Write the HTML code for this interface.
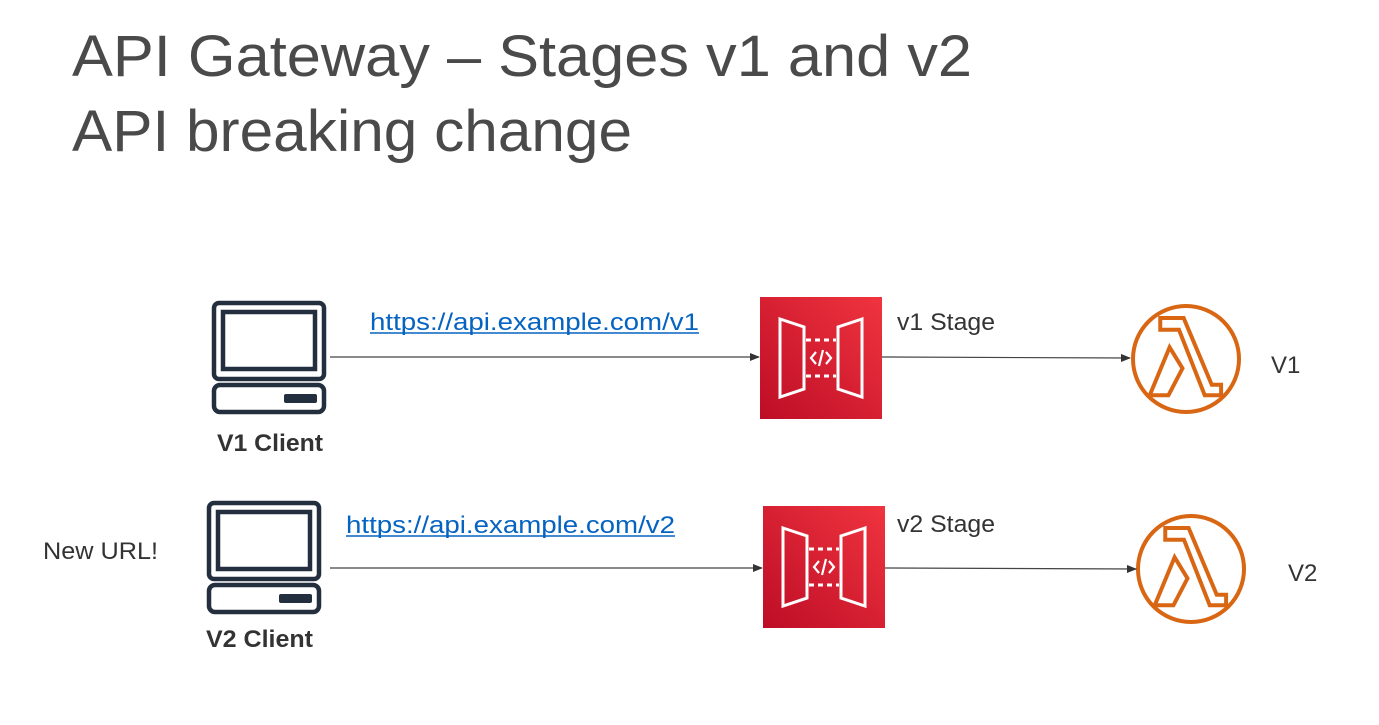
<!DOCTYPE html>
<html><head><meta charset="utf-8"><style>
html,body{margin:0;padding:0;background:#fff;}
svg{display:block;}
</style></head><body>
<svg width="1379" height="725" viewBox="0 0 1379 725" xmlns="http://www.w3.org/2000/svg" font-family="'Liberation Sans', sans-serif">
<defs>
<linearGradient id="rg" x1="0" y1="1" x2="1" y2="0"><stop offset="0" stop-color="#bd0d26"/><stop offset="1" stop-color="#f0343f"/></linearGradient>
<g id="mon" fill="none" stroke="#232f3e" stroke-width="4.5">
<rect x="2" y="2" width="110" height="76" rx="5"/>
<rect x="11" y="11" width="92" height="57"/>
<rect x="2" y="84" width="110" height="27" rx="6"/>
<rect x="72" y="93" width="33" height="9" rx="2" fill="#232f3e" stroke="none"/>
</g>
<g id="gw">
<rect x="0" y="0" width="122" height="122" fill="url(#rg)"/>
<g fill="none" stroke="#fff" stroke-width="3">
<path d="M20 22 L44 30 L44 92 L20 100 Z"/>
<path d="M102 22 L78 30 L78 92 L102 100 Z"/>
<path d="M46 43 H76 M46 79 H76" stroke-dasharray="5 4"/>
<path d="M56 55 L51 61 L56 67 M66 55 L71 61 L66 67 M63 53 L59 69" stroke-width="2.2"/>
</g>
</g>
<g id="lam" fill="none" stroke="#d86613" stroke-width="4">
<circle cx="0" cy="0" r="53"/>
<g transform="scale(1.17)" stroke-width="3.4">
<path d="M-22 -35 H-2 L22 22 H30 V31 H16 L-6 -25 H-22 Z"/>
<path d="M-14 -10 L-3 8 L-15 31 H-31 Z"/>
</g>
</g>
<marker id="ar" markerWidth="10" markerHeight="8" refX="9" refY="4" orient="auto" markerUnits="userSpaceOnUse"><path d="M0 0 L10 4 L0 8 Z" fill="#333"/></marker>
</defs>
<g fill="#4a4a4a" font-size="58">
<text x="72" y="76" textLength="900" lengthAdjust="spacingAndGlyphs">API Gateway – Stages v1 and v2</text>
<text x="72" y="151" textLength="560" lengthAdjust="spacingAndGlyphs">API breaking change</text>
</g>
<use href="#mon" x="212" y="301"/>
<use href="#mon" x="207" y="501"/>
<use href="#gw" x="760" y="297"/>
<use href="#gw" x="763" y="506"/>
<use href="#lam" x="1186" y="359"/>
<use href="#lam" x="1191" y="569"/>
<g stroke="#444" stroke-width="1.2" marker-end="url(#ar)">
<line x1="330" y1="357" x2="759" y2="357"/>
<line x1="882" y1="357" x2="1130" y2="358"/>
<line x1="330" y1="568" x2="762" y2="568"/>
<line x1="885" y1="568" x2="1136" y2="569"/>
</g>
<g font-size="24">
<text x="370" y="330" fill="#0563c1" textLength="329" lengthAdjust="spacingAndGlyphs">https://api.example.com/v1</text>
<text x="346" y="533" fill="#0563c1" textLength="329" lengthAdjust="spacingAndGlyphs">https://api.example.com/v2</text>
<text x="897" y="330" fill="#333" textLength="98" lengthAdjust="spacingAndGlyphs">v1 Stage</text>
<text x="897" y="532" fill="#333" textLength="98" lengthAdjust="spacingAndGlyphs">v2 Stage</text>
<text x="1271" y="373" fill="#333">V1</text>
<text x="1288" y="581" fill="#333">V2</text>
<text x="43" y="559" fill="#333" textLength="115" lengthAdjust="spacingAndGlyphs">New URL!</text>
<text x="217" y="451" fill="#333" font-weight="bold" textLength="106" lengthAdjust="spacingAndGlyphs">V1 Client</text>
<text x="206" y="647" fill="#333" font-weight="bold" textLength="107" lengthAdjust="spacingAndGlyphs">V2 Client</text>
</g>
<line x1="370" y1="333" x2="699" y2="333" stroke="#0563c1" stroke-width="1.5"/>
<line x1="346" y1="536" x2="675" y2="536" stroke="#0563c1" stroke-width="1.5"/>
</svg>
</body></html>
